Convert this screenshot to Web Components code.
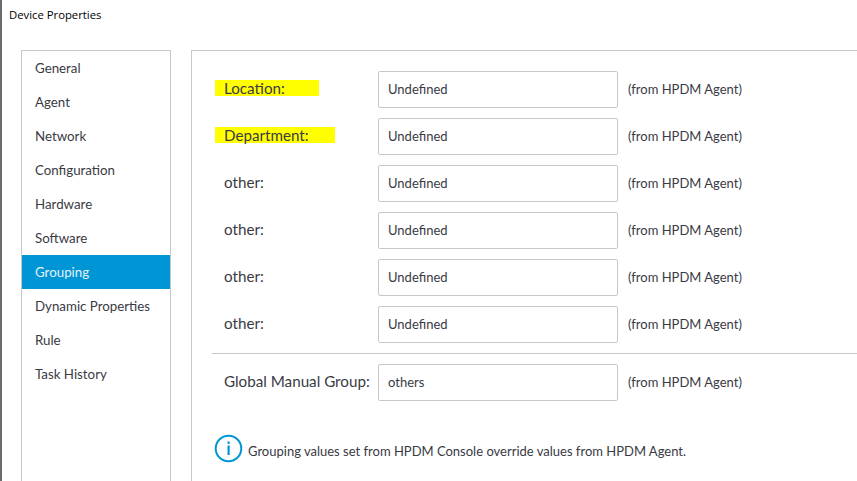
<!DOCTYPE html>
<html><head><meta charset="utf-8"><style>
html,body{margin:0;padding:0;background:#fff;overflow:hidden}
body{font-family:Lato,"Open Sans",sans-serif;color:#3a3a44}
</style></head><body>
<device-dialog>
<span slot="title">Device Properties</span>
<nav-list slot="nav">
<nav-item>General</nav-item><nav-item>Agent</nav-item><nav-item>Network</nav-item><nav-item>Configuration</nav-item><nav-item>Hardware</nav-item><nav-item>Software</nav-item><nav-item active>Grouping</nav-item><nav-item>Dynamic Properties</nav-item><nav-item>Rule</nav-item><nav-item>Task History</nav-item>
</nav-list>
<group-row mark="95">Location:<span slot="value">Undefined</span></group-row>
<group-row mark="111">Department:<span slot="value">Undefined</span></group-row>
<group-row>other:<span slot="value">Undefined</span></group-row>
<group-row>other:<span slot="value">Undefined</span></group-row>
<group-row>other:<span slot="value">Undefined</span></group-row>
<group-row>other:<span slot="value">Undefined</span></group-row>
<group-row slot="global">Global Manual Group:<span slot="value">others</span></group-row>
<info-note slot="note">Grouping values set from HPDM Console override values from HPDM Agent.</info-note>
</device-dialog>
<script>
function def(name,html,init){customElements.define(name,class extends HTMLElement{constructor(){super();this.attachShadow({mode:'open'}).innerHTML=html;}connectedCallback(){init&&init(this)}})}
def('device-dialog',`<style>
:host{display:block;width:857px;height:481px;box-sizing:border-box;border-left:2px solid #6b6b6b;overflow:hidden;position:relative}
.title{height:50px;box-sizing:border-box;padding:7px 0 0 7px;font:11.3px/16px "Open Sans",sans-serif;color:#000}
.body{display:flex;padding-left:19px}
.side{width:150px;height:431px;box-sizing:border-box;border:1px solid #c8c8c8;border-bottom:0;flex:none}
.panel{margin-left:20px;flex:1;height:431px;box-sizing:border-box;border:solid #c8c8c8;border-width:1px 0 0 1px;padding-top:20px}
.rows{display:flex;flex-direction:column;gap:10px;padding-left:20px}
.div{height:1px;background:#c8c8c8;margin:10px 0 10px 20px;}
.glob{padding-left:20px}
.note{margin:33px 0 0 22px}
</style>
<div class="title"><slot name="title"></slot></div>
<div class="body"><div class="side"><slot name="nav"></slot></div>
<div class="panel"><div class="rows"><slot></slot></div><div class="div"></div><div class="glob"><slot name="global"></slot></div><div class="note"><slot name="note"></slot></div></div></div>`);
def('nav-list',`<style>:host{display:flex;flex-direction:column}</style><slot></slot>`);
def('nav-item',`<style>:host{display:block;height:34px;line-height:34px;padding-left:13px;font-size:13.3px;color:#3a3a44}
:host([active]){background:#0096d6;color:#e4f1f8}</style><slot></slot>`);
def('group-row',`<style>:host{display:flex;align-items:center;height:37px;font-size:15.2px;color:#3a3a44}
.l{width:166px;flex:none;padding-left:12px;box-sizing:border-box;position:relative;line-height:16px;margin-top:-3px}
.l span{position:relative}
.mark{position:absolute;left:3px;top:0;height:16px;background:#ffff00;display:none}
.i{width:240px;height:37px;box-sizing:border-box;border:1px solid #c8c8c8;border-radius:2px;padding-left:9px;line-height:35px;font-size:13px;flex:none;margin-right:10px}
.f{font-size:13px;margin-top:-2px}</style>
<div class="l"><div class="mark"></div><span><slot></slot></span></div><div class="i"><slot name="value"></slot></div><div class="f">(from HPDM Agent)</div>`,
el=>{const m=el.getAttribute('mark');if(m){const d=el.shadowRoot.querySelector('.mark');d.style.display='block';d.style.width=(+m+9)+'px';}});
def('info-note',`<style>:host{display:flex;align-items:center;gap:5px;font-size:13px;color:#3a3a44}svg{flex:none;display:block}span{position:relative;top:2px}</style>
<svg width="29" height="29" viewBox="0 0 29 29"><circle cx="14.5" cy="14.5" r="12.8" fill="none" stroke="#0096d6" stroke-width="2"/><rect x="13.5" y="11.5" width="2.2" height="9.5" fill="#0096d6"/><rect x="13.5" y="7.5" width="2.2" height="2.4" fill="#0096d6"/></svg><span><slot></slot></span>`);
</script>
</body></html>
